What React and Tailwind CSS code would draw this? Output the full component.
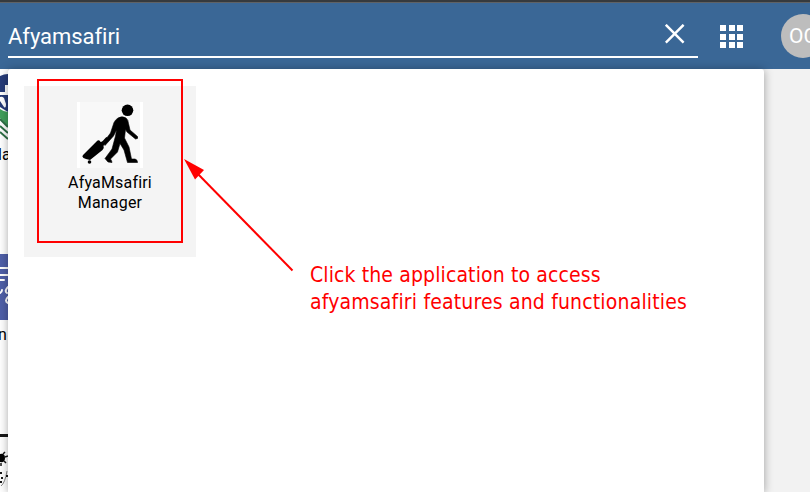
function CloseIcon() {
  return (
    <svg width="20" height="20" viewBox="0 0 20 20" className="shrink-0" fill="none" stroke="white" strokeWidth="2.5">
      <path d="M0.8 0.8 L18.6 18.6 M18.6 0.8 L0.8 18.6" />
    </svg>
  );
}

function AppsIcon() {
  return (
    <div className="grid h-[23px] w-[23px] shrink-0 grid-cols-3 gap-[2.5px]">
      {Array.from({ length: 9 }, (_, i) => (
        <span key={i} className="bg-white" />
      ))}
    </div>
  );
}

function Header() {
  return (
    <header className="flex h-[69px] items-start border-t-2 border-[#363a3e] bg-[#3a6796] text-white shadow-[inset_0_1px_0_#5f6265]">
      <div className="ml-2 mt-[11px] flex h-[45px] w-[690px] shrink-0 items-start justify-between border-b-2 border-white pr-[13px]">
        <span className="mt-[9px] text-[22px] leading-[30px] tracking-[-0.05px]">Afyamsafiri</span>
        <div className="mt-[11px]"><CloseIcon /></div>
      </div>
      <div className="ml-[22px] mt-[23px]"><AppsIcon /></div>
      <div className="ml-[38px] mt-3 flex h-11 w-11 shrink-0 items-center justify-center rounded-full bg-[#bdbdbd] pt-px text-[21px]">
        OC
      </div>
    </header>
  );
}

function BackgroundApps() {
  return (
    <div className="w-2 shrink-0 overflow-hidden bg-white text-[16px] leading-[20px] text-black">
      <div className="mt-[5px] h-[66px]">
        <svg width="8" height="66" viewBox="0 74 8 66">
          <path d="M0 76 Q4 74 8 74 V112 L0 107Z" fill="#263b78" />
          <path d="M0 109 Q4 112 8 112 V126 L0 118Z" fill="#41a05c" />
          <path d="M0 119 L8 127 M0 126 L8 133 M0 132 L8 139" stroke="#2d7045" strokeWidth="2" />
          <path d="M5 85 H8 V95 H0 V92 H5Z M0 97 Q2 96 4 98 L6 104 Q6 109 4 107 L0 101Z" fill="white" />
        </svg>
      </div>
      <div className="mt-[5px] -ml-[2px] whitespace-nowrap">la</div>
      <div className="mt-[89px] h-[66px]">
        <svg width="8" height="66" viewBox="0 254 8 66">
          <path d="M0 254 H8 V320 H0Z" fill="#4f5fa8" />
          <g stroke="white" strokeWidth="2" fill="none" strokeLinecap="round">
            <path d="M0 268 H8 M0 275 H8 M0 280 H4 M0 293 Q2 292 2 290" />
            <path d="M8 287 Q4 291 7 293 M8 297 Q4 301 8 303" />
          </g>
        </svg>
      </div>
      <div className="mt-[5px] -ml-[2px] whitespace-nowrap">n</div>
      <div className="mt-[89px] h-[58px]">
        <svg width="8" height="58" viewBox="0 434 8 58">
          <path d="M0 434 H8 V437 H0Z" fill="#171717" />
          <path d="M0 454 Q5 453 5 458 Q5 463 0 462Z" fill="black" />
          <path d="M3 454 L5 452 M5 457 L8 456 M4 461 L6 463 M1 463 V466" stroke="#171717" strokeWidth="1.5" />
          <path d="M7 471 Q5 483 1 486" stroke="#888" fill="none" />
          <path d="M0 473 H2 M1 478 H3 M0 482 H2 M6 476 H8" stroke="#171717" strokeWidth="2" />
        </svg>
      </div>
    </div>
  );
}

function TravellerIcon() {
  return (
    <svg width="66" height="66" viewBox="0 0 66 66">
      <rect width="66" height="66" fill="white" />
      <rect x="3" width="60" height="66" fill="#f8f8f8" />
      <circle cx="50.5" cy="8.3" r="5.8" />
      <path d="M41 16 Q45 13.5 49 16 Q51.5 18 51.5 21.5 L53 28 L60.5 34.5 Q61.5 37 58.5 37 L50 30 L48.5 27.5 L47.5 36 L52 45 L54.5 57 H58 Q60.5 57.5 60.5 60.5 H50.5 L47 48 L43 41.5 L40.5 50 L33.5 57 Q35 59 35 60.5 L31 60 L28 56.5 L35 47 L38.5 34 L39.5 28 L36.5 34 L28 43.5 L26 41 L33.5 31 L37 20.5 Q38.5 17.5 41 16Z" stroke="black" strokeWidth="0.6" />
      <path d="M6 53 L19.5 39.5 Q21.5 37.5 23 39 L23.5 40 L25.5 39.5 L27.5 41.5 L26.5 44 Q27.5 46 25.5 48 L13 58 L9 57 L6.5 56 Q4.5 54.5 6 53Z" />
      <circle cx="12.5" cy="60" r="1.8" />
      <path d="M24 42 L30 35.5" stroke="black" strokeWidth="1.7" />
    </svg>
  );
}

function Annotation() {
  return (
    <>
      <div className="absolute left-[37px] top-[79px] z-20 h-[164px] w-[146px] border-2 border-[#ff0000]" />
      <svg className="absolute left-[180px] top-[150px] z-20" width="120" height="130" viewBox="180 150 120 130">
        <path d="M195 171 L292.5 270.5" stroke="#ff0000" strokeWidth="2" />
        <path d="M184 159 L204 170 L195 179.5Z" fill="#ff0000" />
      </svg>
      <div className="absolute left-[310px] top-[262px] z-20 whitespace-nowrap font-['DejaVu_Sans_Condensed','DejaVu_Sans',sans-serif] text-[21px] leading-[27px] text-[#ff0000]">
        <p className="tracking-[0.12px]">Click the application to access</p>
        <p className="tracking-[0.17px]">afyamsafiri features and functionalities</p>
      </div>
    </>
  );
}

export default function App() {
  return (
    <div className="relative h-[492px] w-[810px] overflow-hidden bg-[#f2f2f2] font-[Roboto,sans-serif]">
      <Header />
      <main className="flex h-[423px]">
        <BackgroundApps />
        <section className="relative z-10 w-[756px] shrink-0 rounded-t-[3px] bg-white px-4 pt-[17px] shadow-[0_1px_10px_rgba(0,0,0,0.35)]">
          <div className="flex h-[171px] w-[172px] flex-col items-center bg-[#f4f4f4] pt-4 text-center text-[16px] leading-[20px] text-black">
            <TravellerIcon />
            <span className="mt-[5px] w-[100px] tracking-[0.18px]">AfyaMsafiri Manager</span>
          </div>
        </section>
      </main>
      <Annotation />
    </div>
  );
}
